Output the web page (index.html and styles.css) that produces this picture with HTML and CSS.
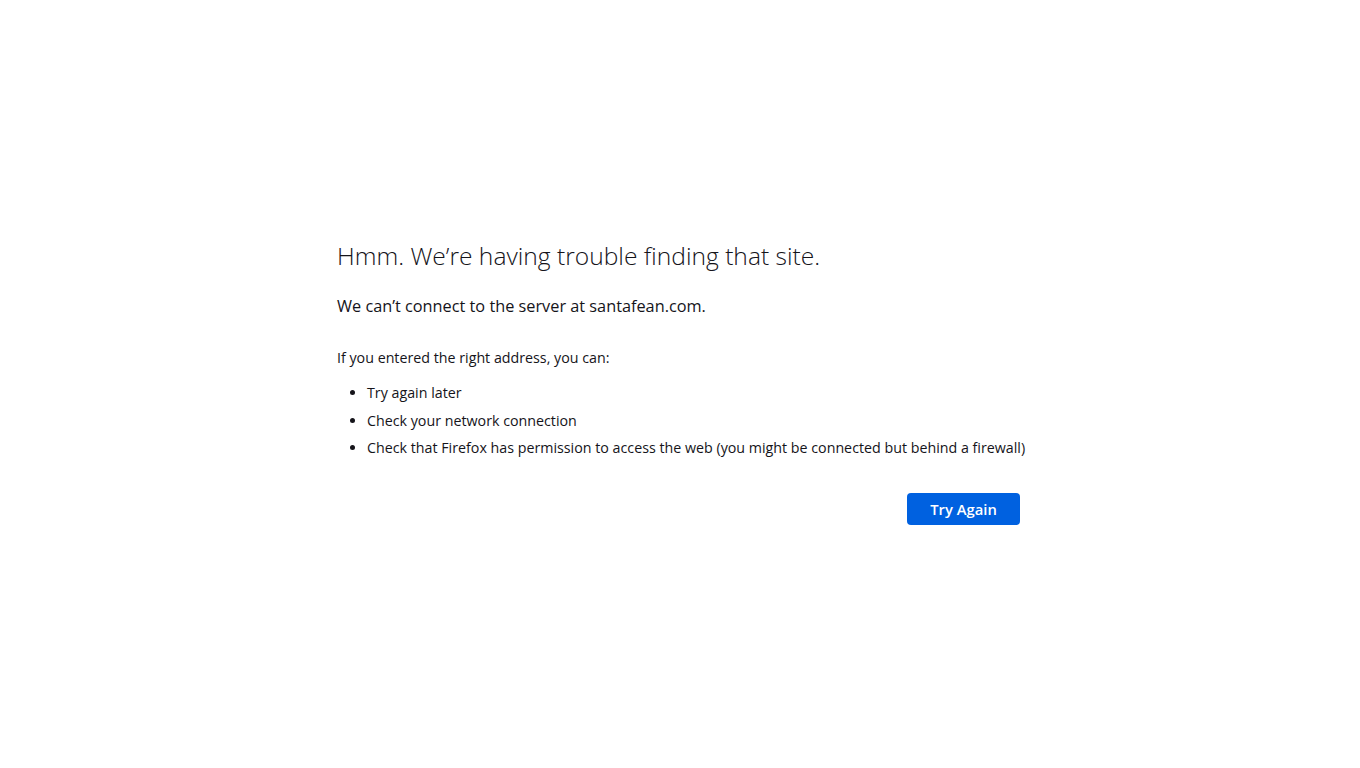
FILE: index.html
```html
<!DOCTYPE html>
<html lang="en">
<head>
<meta charset="utf-8">
<title>Server Not Found</title>
<link rel="stylesheet" href="styles.css">
</head>
<body>
<main class="page">
  <div class="container">
    <h1 class="title">Hmm. We’re having trouble finding that site.</h1>
    <p class="short-desc">We can’t connect to the server at santafean.com.</p>
    <div class="long-desc">
      <p class="intro">If you entered the right address, you can:</p>
      <ul class="tips">
        <li>Try again later</li>
        <li>Check your network connection</li>
        <li>Check that Firefox has permission to access the web (you might be connected but behind a firewall)</li>
      </ul>
    </div>
    <div class="actions">
      <button class="primary" type="button">Try Again</button>
    </div>
  </div>
</main>
</body>
</html>
```
FILE: styles.css
```css
html, body {
  margin: 0;
  padding: 0;
  background: #ffffff;
}
body {
  font-family: "Open Sans", "Noto Sans", sans-serif;
  font-size: 14.25px;
  color: #15141a;
}
.page {
  padding-top: 239px;
  display: flex;
  justify-content: center;
}
.container {
  width: 686px;
}
.title {
  margin: 0;
  font-size: 24.6px;
  font-weight: 300;
  line-height: 34px;
  white-space: nowrap;
}
.short-desc {
  margin: 21px 0 0;
  font-size: 16.3px;
  line-height: 24px;
}
.long-desc {
  margin-top: 29px;
}
.intro {
  margin: 0;
  line-height: 22px;
}
.tips {
  margin: 13px 0 0;
  padding-left: 30px;
  white-space: nowrap;
}
.tips li {
  line-height: 22px;
  margin-bottom: 5.5px;
}
.tips li:last-child {
  margin-bottom: 0;
}
.actions {
  display: flex;
  justify-content: flex-end;
  margin-top: 34px;
  padding-right: 3px;
}
.primary {
  font-family: inherit;
  font-size: 14.8px;
  font-weight: 600;
  color: #ffffff;
  background: #0061e0;
  border: none;
  border-radius: 4px;
  width: 113px;
  height: 32px;
  padding: 0;
  cursor: pointer;
}
```
